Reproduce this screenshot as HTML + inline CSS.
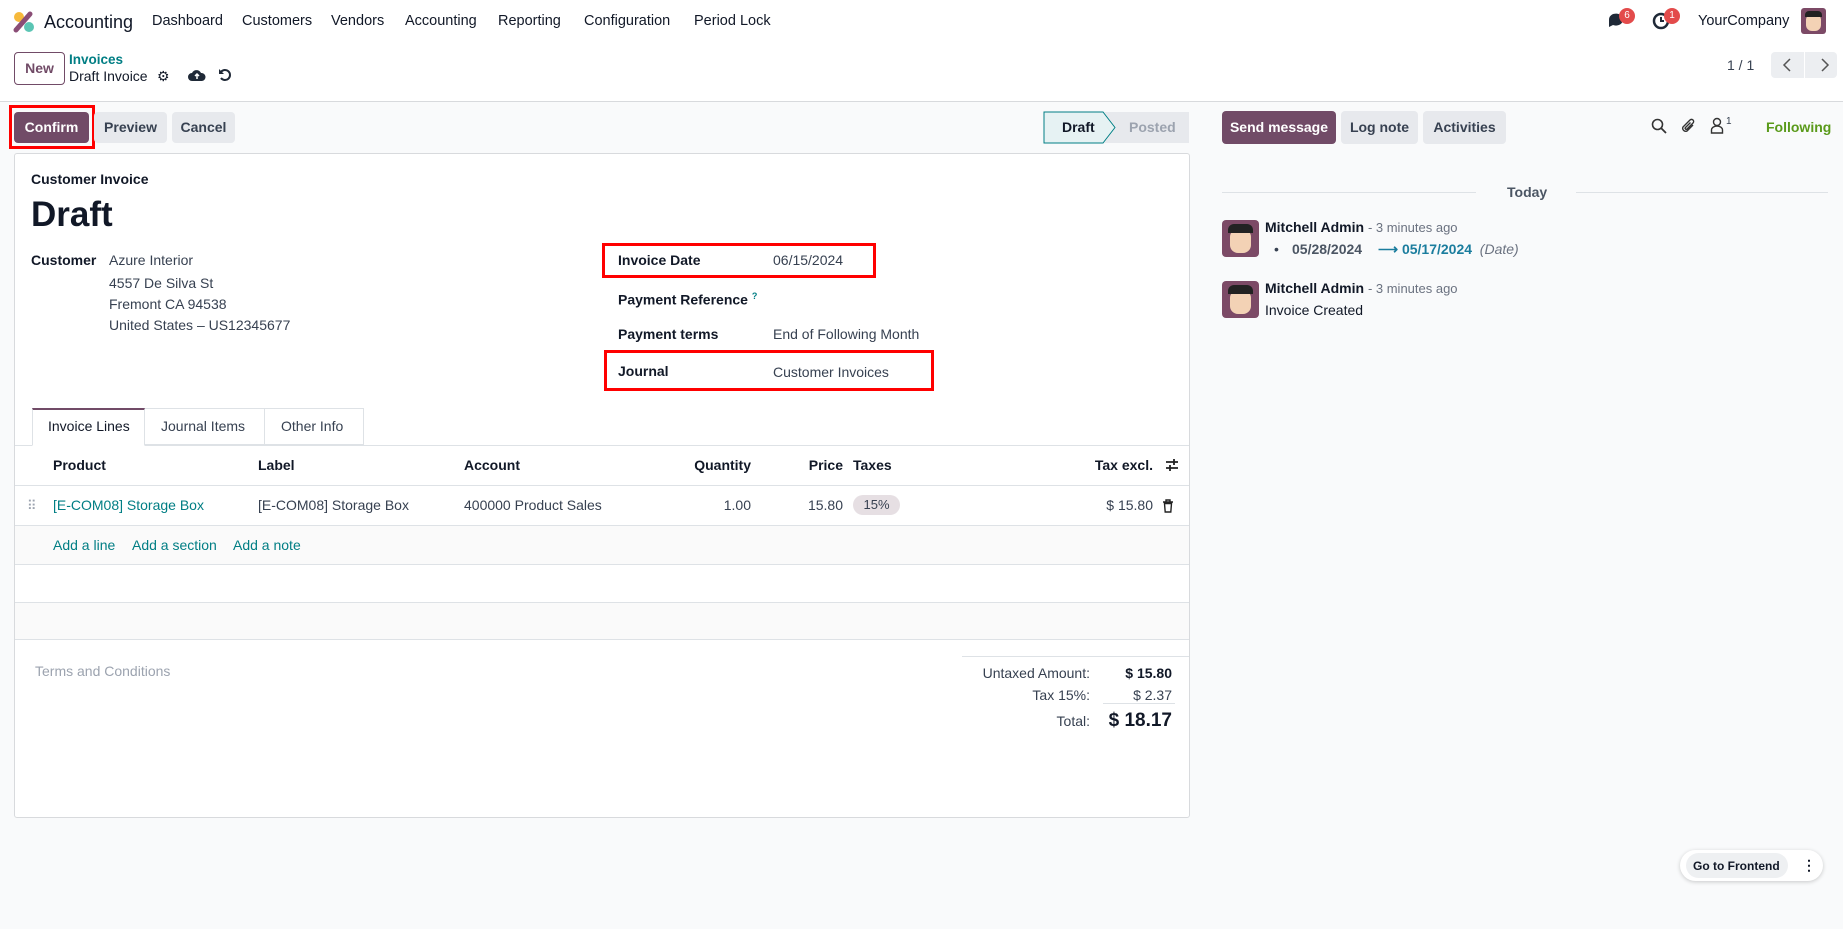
<!DOCTYPE html>
<html><head><meta charset="utf-8"><style>
*{box-sizing:border-box;margin:0;padding:0}
body{width:1843px;height:929px;position:relative;background:#f9fafb;font-family:"Liberation Sans",sans-serif;font-size:14px;color:#374151;overflow:hidden}
.a{position:absolute;white-space:nowrap;line-height:18px}
.b{font-weight:bold}
.l{color:#017e84}
.btn{position:absolute;border-radius:4px;background:#e7e9ed;color:#374151;font-weight:bold;text-align:center;font-size:14px}
.red{position:absolute;border:3px solid #f00}
.hl{position:absolute;height:1px;background:#dee2e6}
.r{text-align:right}
.nav{font-size:14.5px;color:#111827}
</style></head><body>
<div style="position:absolute;left:0;top:0;width:1843px;height:102px;background:#fff;border-bottom:1px solid #d8dadd"></div>
<svg class="a" style="left:13px;top:11px" width="22" height="22" viewBox="0 0 22 22"><circle cx="6" cy="6" r="5" fill="#f6b93b"/><circle cx="16" cy="16" r="5" fill="#5bc5b4"/><path d="M3 19 L17 3" stroke="#8a4d76" stroke-width="5" stroke-linecap="round"/></svg>
<div class="a" style="left:44px;top:11px;font-size:18px;line-height:22px;color:#111827">Accounting</div>
<div class="a nav" style="left:152px;top:12px">Dashboard</div>
<div class="a nav" style="left:242px;top:12px">Customers</div>
<div class="a nav" style="left:331px;top:12px">Vendors</div>
<div class="a nav" style="left:405px;top:12px">Accounting</div>
<div class="a nav" style="left:498px;top:12px">Reporting</div>
<div class="a nav" style="left:584px;top:12px">Configuration</div>
<div class="a nav" style="left:694px;top:12px">Period Lock</div>
<svg class="a" style="left:1607px;top:11px" width="22" height="20"><path d="M2 9 a7 6 0 1 1 4 5 l-4 2z" fill="#1f2937"/></svg>
<div class="a" style="left:1619px;top:8px;width:16px;height:16px;border-radius:8px;background:#e34b4b;color:#fff;font-size:10px;line-height:16px;text-align:center">6</div>
<svg class="a" style="left:1652px;top:11px" width="20" height="20"><circle cx="9" cy="10" r="7" fill="none" stroke="#1f2937" stroke-width="2.5"/><path d="M9 6v4h3" stroke="#1f2937" stroke-width="2" fill="none"/></svg>
<div class="a" style="left:1664px;top:8px;width:16px;height:16px;border-radius:8px;background:#e34b4b;color:#fff;font-size:10px;line-height:16px;text-align:center">1</div>
<div class="a nav" style="left:1698px;top:12px">YourCompany</div>
<div class="a" style="left:1801px;top:8px;width:25px;height:26px;border-radius:3px;background:#7c4a66"><div style="position:absolute;left:5px;top:6px;width:15px;height:17px;border-radius:6px;background:#f3d2b5"></div><div style="position:absolute;left:4px;top:3px;width:17px;height:6px;border-radius:4px 4px 0 0;background:#222"></div></div>

<div class="a" style="left:14px;top:52px;width:51px;height:33px;border:1px solid #714b67;border-radius:4px;color:#714b67;font-weight:bold;text-align:center;line-height:31px">New</div>
<div class="a b l" style="left:69px;top:51px;font-size:13.5px">Invoices</div>
<div class="a" style="left:69px;top:67px;color:#111827">Draft Invoice</div>
<div class="a" style="left:157px;top:67px;font-size:14px;color:#111827">⚙</div>
<svg class="a" style="left:188px;top:68px" width="18" height="14"><path d="M4 13 a4 4 0 0 1 0-8 a5 5 0 0 1 9 0 a4 4 0 0 1 1 8z" fill="#1f2937"/><path d="M9 6v5M7 8l2-2 2 2" stroke="#fff" stroke-width="1.5" fill="none"/></svg>
<svg class="a" style="left:218px;top:68px" width="14" height="14"><path d="M3 4 A5 5 0 1 1 3 10" stroke="#1f2937" stroke-width="2" fill="none"/><path d="M1 1v5h5z" fill="#1f2937"/></svg>
<div class="a" style="left:1727px;top:56px;color:#374151">1 / 1</div>
<div class="a" style="left:1771px;top:52px;width:66px;height:26px;border-radius:4px;background:#eceef1"></div>
<div class="a" style="left:1804px;top:52px;width:1px;height:26px;background:#fff"></div>
<svg class="a" style="left:1778px;top:57px" width="56" height="16"><path d="M12 2l-6 6 6 6M44 2l6 6-6 6" stroke="#555" stroke-width="1.5" fill="none"/></svg>

<div class="btn" style="left:14px;top:112px;width:75px;height:31px;line-height:31px;background:#714b67;color:#fff">Confirm</div>
<div class="red" style="left:9px;top:105px;width:86px;height:44px"></div>
<div class="btn" style="left:94px;top:112px;width:73px;height:31px;line-height:31px">Preview</div>
<div class="btn" style="left:172px;top:112px;width:63px;height:31px;line-height:31px">Cancel</div>
<svg class="a" style="left:1043px;top:111px" width="147" height="33"><path d="M1 1H60L72 16.5 60 32H1z" fill="#e6f2f3" stroke="#017e84"/><path d="M61 1H146V32H61L73 16.5z" fill="#e7e9ed"/></svg>
<div class="a b" style="left:1062px;top:118px;color:#111827">Draft</div>
<div class="a b" style="left:1129px;top:118px;color:#9ca3af">Posted</div>

<div class="a" style="left:14px;top:153px;width:1176px;height:665px;background:#fff;border:1px solid #d8dadd;border-radius:3px"></div>
<div class="a b" style="left:31px;top:170px;font-size:14px;color:#111827">Customer Invoice</div>
<div class="a b" style="left:31px;top:194px;font-size:35px;line-height:42px;color:#111827">Draft</div>
<div class="a b" style="left:31px;top:251px;font-size:14px;color:#111827">Customer</div>
<div class="a" style="left:109px;top:251px">Azure Interior</div>
<div class="a" style="left:109px;top:274px">4557 De Silva St</div>
<div class="a" style="left:109px;top:295px">Fremont CA 94538</div>
<div class="a" style="left:109px;top:316px">United States – US12345677</div>
<div class="a b" style="left:618px;top:251px;font-size:14px;color:#111827">Invoice Date</div>
<div class="a" style="left:773px;top:251px">06/15/2024</div>
<div class="red" style="left:602px;top:243px;width:274px;height:35px"></div>
<div class="a b" style="left:618px;top:287px;font-size:14px;color:#111827">Payment Reference <sup class="l" style="font-size:9px">?</sup></div>
<div class="a b" style="left:618px;top:325px;font-size:14px;color:#111827">Payment terms</div>
<div class="a" style="left:773px;top:325px">End of Following Month</div>
<div class="a b" style="left:618px;top:362px;font-size:14px;color:#111827">Journal</div>
<div class="a" style="left:773px;top:363px">Customer Invoices</div>
<div class="red" style="left:604px;top:350px;width:330px;height:41px"></div>

<div class="hl" style="left:15px;top:445px;width:1174px"></div>
<div class="a" style="left:32px;top:408px;width:113px;height:38px;background:#fff;border:1px solid #dee2e6;border-bottom-color:#fff;border-top:2px solid #714b67"></div>
<div class="a" style="left:145px;top:408px;width:120px;height:37px;border:1px solid #dee2e6;border-left:0"></div>
<div class="a" style="left:264px;top:408px;width:100px;height:37px;border:1px solid #dee2e6;border-left:0"></div>
<div class="a" style="left:48px;top:417px;color:#111827">Invoice Lines</div>
<div class="a" style="left:161px;top:417px">Journal Items</div>
<div class="a" style="left:281px;top:417px">Other Info</div>

<div class="a b" style="left:53px;top:456px;color:#111827">Product</div>
<div class="a b" style="left:258px;top:456px;color:#111827">Label</div>
<div class="a b" style="left:464px;top:456px;color:#111827">Account</div>
<div class="a b r" style="left:651px;width:100px;top:456px;color:#111827">Quantity</div>
<div class="a b r" style="left:763px;width:80px;top:456px;color:#111827">Price</div>
<div class="a b" style="left:853px;top:456px;color:#111827">Taxes</div>
<div class="a b r" style="left:1053px;width:100px;top:456px;color:#111827">Tax excl.</div>
<svg class="a" style="left:1164px;top:457px" width="16" height="16"><path d="M2 5h12M10 2v6M2 11h12M6 8v6" stroke="#222" stroke-width="1.8"/></svg>
<div class="hl" style="left:15px;top:485px;width:1174px"></div>
<div class="a" style="left:27px;top:497px;font-size:13px;color:#9ca3af;letter-spacing:-2px">⠿</div>
<div class="a l" style="left:53px;top:496px">[E-COM08] Storage Box</div>
<div class="a" style="left:258px;top:496px">[E-COM08] Storage Box</div>
<div class="a" style="left:464px;top:496px">400000 Product Sales</div>
<div class="a r" style="left:651px;width:100px;top:496px">1.00</div>
<div class="a r" style="left:763px;width:80px;top:496px">15.80</div>
<div class="a" style="left:853px;top:495px;width:47px;height:20px;border-radius:10px;background:#e6dfe3;font-size:13px;text-align:center;line-height:20px">15%</div>
<div class="a r" style="left:1053px;width:100px;top:496px">$ 15.80</div>
<svg class="a" style="left:1162px;top:499px" width="12" height="14"><path d="M1 3h10M4 3V1h4v2M2.5 4.5h7l-.7 8.5h-5.6z" stroke="#222" stroke-width="1.4" fill="none"/></svg>
<div class="hl" style="left:15px;top:525px;width:1174px"></div>
<div class="a" style="left:15px;top:526px;width:1174px;height:38px;background:#fafafa"></div>
<div class="a l" style="left:53px;top:536px">Add a line</div>
<div class="a l" style="left:132px;top:536px">Add a section</div>
<div class="a l" style="left:233px;top:536px">Add a note</div>
<div class="hl" style="left:15px;top:564px;width:1174px"></div>
<div class="hl" style="left:15px;top:602px;width:1174px"></div>
<div class="a" style="left:15px;top:603px;width:1174px;height:36px;background:#fafafa"></div>
<div class="hl" style="left:15px;top:639px;width:1174px"></div>

<div class="a" style="left:35px;top:662px;color:#9ca3af;font-size:14px">Terms and Conditions</div>
<div class="hl" style="left:962px;top:656px;width:227px"></div>
<div class="a r" style="left:900px;width:190px;top:664px;font-size:14px">Untaxed Amount:</div>
<div class="a b r" style="left:1100px;width:72px;top:664px;color:#111827">$ 15.80</div>
<div class="a r" style="left:900px;width:190px;top:686px;font-size:14px">Tax 15%:</div>
<div class="a r" style="left:1100px;width:72px;top:686px">$ 2.37</div>
<div class="hl" style="left:1103px;top:703px;width:72px"></div>
<div class="a r" style="left:900px;width:190px;top:712px;font-size:14px">Total:</div>
<div class="a b r" style="left:1090px;width:82px;top:709px;font-size:19px;line-height:24px;color:#111827">$ 18.17</div>

<div class="btn" style="left:1222px;top:111px;width:114px;height:33px;line-height:33px;background:#714b67;color:#fff">Send message</div>
<div class="btn" style="left:1341px;top:111px;width:77px;height:33px;line-height:33px">Log note</div>
<div class="btn" style="left:1423px;top:111px;width:83px;height:33px;line-height:33px">Activities</div>
<svg class="a" style="left:1651px;top:118px" width="16" height="16"><circle cx="6.5" cy="6.5" r="5" stroke="#333" stroke-width="1.6" fill="none"/><path d="M10 10l5 5" stroke="#333" stroke-width="1.8"/></svg>
<svg class="a" style="left:1680px;top:117px" width="16" height="18"><path d="M13 8l-6 6a3 3 0 0 1-4-4l7-7a2 2 0 0 1 3 3l-6 6a1 1 0 0 1-1.5-1.5l5-5" stroke="#333" stroke-width="1.4" fill="none"/></svg>
<svg class="a" style="left:1710px;top:117px" width="14" height="18"><circle cx="7" cy="5" r="3.5" stroke="#333" stroke-width="1.4" fill="none"/><path d="M1.5 16v-3a5.5 4 0 0 1 11 0v3z" stroke="#333" stroke-width="1.4" fill="none"/></svg>
<div class="a" style="left:1726px;top:113px;font-size:10px">1</div>
<div class="a b" style="left:1766px;top:118px;color:#5a9a1a">Following</div>
<div class="hl" style="left:1222px;top:192px;width:254px"></div>
<div class="hl" style="left:1576px;top:192px;width:252px"></div>
<div class="a b" style="left:1507px;top:183px;font-size:14px;color:#4b5563">Today</div>

<div class="a" style="left:1222px;top:220px;width:37px;height:37px;border-radius:4px;background:#7c4a66"><div style="position:absolute;left:8px;top:9px;width:21px;height:24px;border-radius:8px;background:#f3d2b5"></div><div style="position:absolute;left:6px;top:4px;width:25px;height:9px;border-radius:6px 6px 0 0;background:#222"></div></div>
<div class="a b" style="left:1265px;top:218px;font-size:14px;color:#111827">Mitchell Admin <span style="font-weight:normal;color:#6b7280;font-size:13px">- 3 minutes ago</span></div>
<div class="a" style="left:1274px;top:240px">•</div>
<div class="a b" style="left:1292px;top:240px;font-size:14px;color:#4b5563">05/28/2024</div>
<div class="a b" style="left:1378px;top:240px;font-size:14px;color:#1b7d9e">⟶ 05/17/2024 <i style="font-weight:normal;color:#6b7280">&nbsp;(Date)</i></div>
<div class="a" style="left:1222px;top:281px;width:37px;height:37px;border-radius:4px;background:#7c4a66"><div style="position:absolute;left:8px;top:9px;width:21px;height:24px;border-radius:8px;background:#f3d2b5"></div><div style="position:absolute;left:6px;top:4px;width:25px;height:9px;border-radius:6px 6px 0 0;background:#222"></div></div>
<div class="a b" style="left:1265px;top:279px;font-size:14px;color:#111827">Mitchell Admin <span style="font-weight:normal;color:#6b7280;font-size:13px">- 3 minutes ago</span></div>
<div class="a" style="left:1265px;top:301px;color:#111827">Invoice Created</div>

<div class="a" style="left:1680px;top:850px;width:143px;height:31px;border-radius:16px;background:#fff;box-shadow:0 1px 4px rgba(0,0,0,.2)"></div>
<div class="a" style="left:1686px;top:853px;width:102px;height:25px;border-radius:13px;background:#eef0f2"></div>
<div class="a b" style="left:1693px;top:857px;font-size:12px;color:#111827">Go to Frontend</div>
<div class="a b" style="left:1802px;top:856px;font-size:14px;color:#111827">⋮</div>
</body></html>
